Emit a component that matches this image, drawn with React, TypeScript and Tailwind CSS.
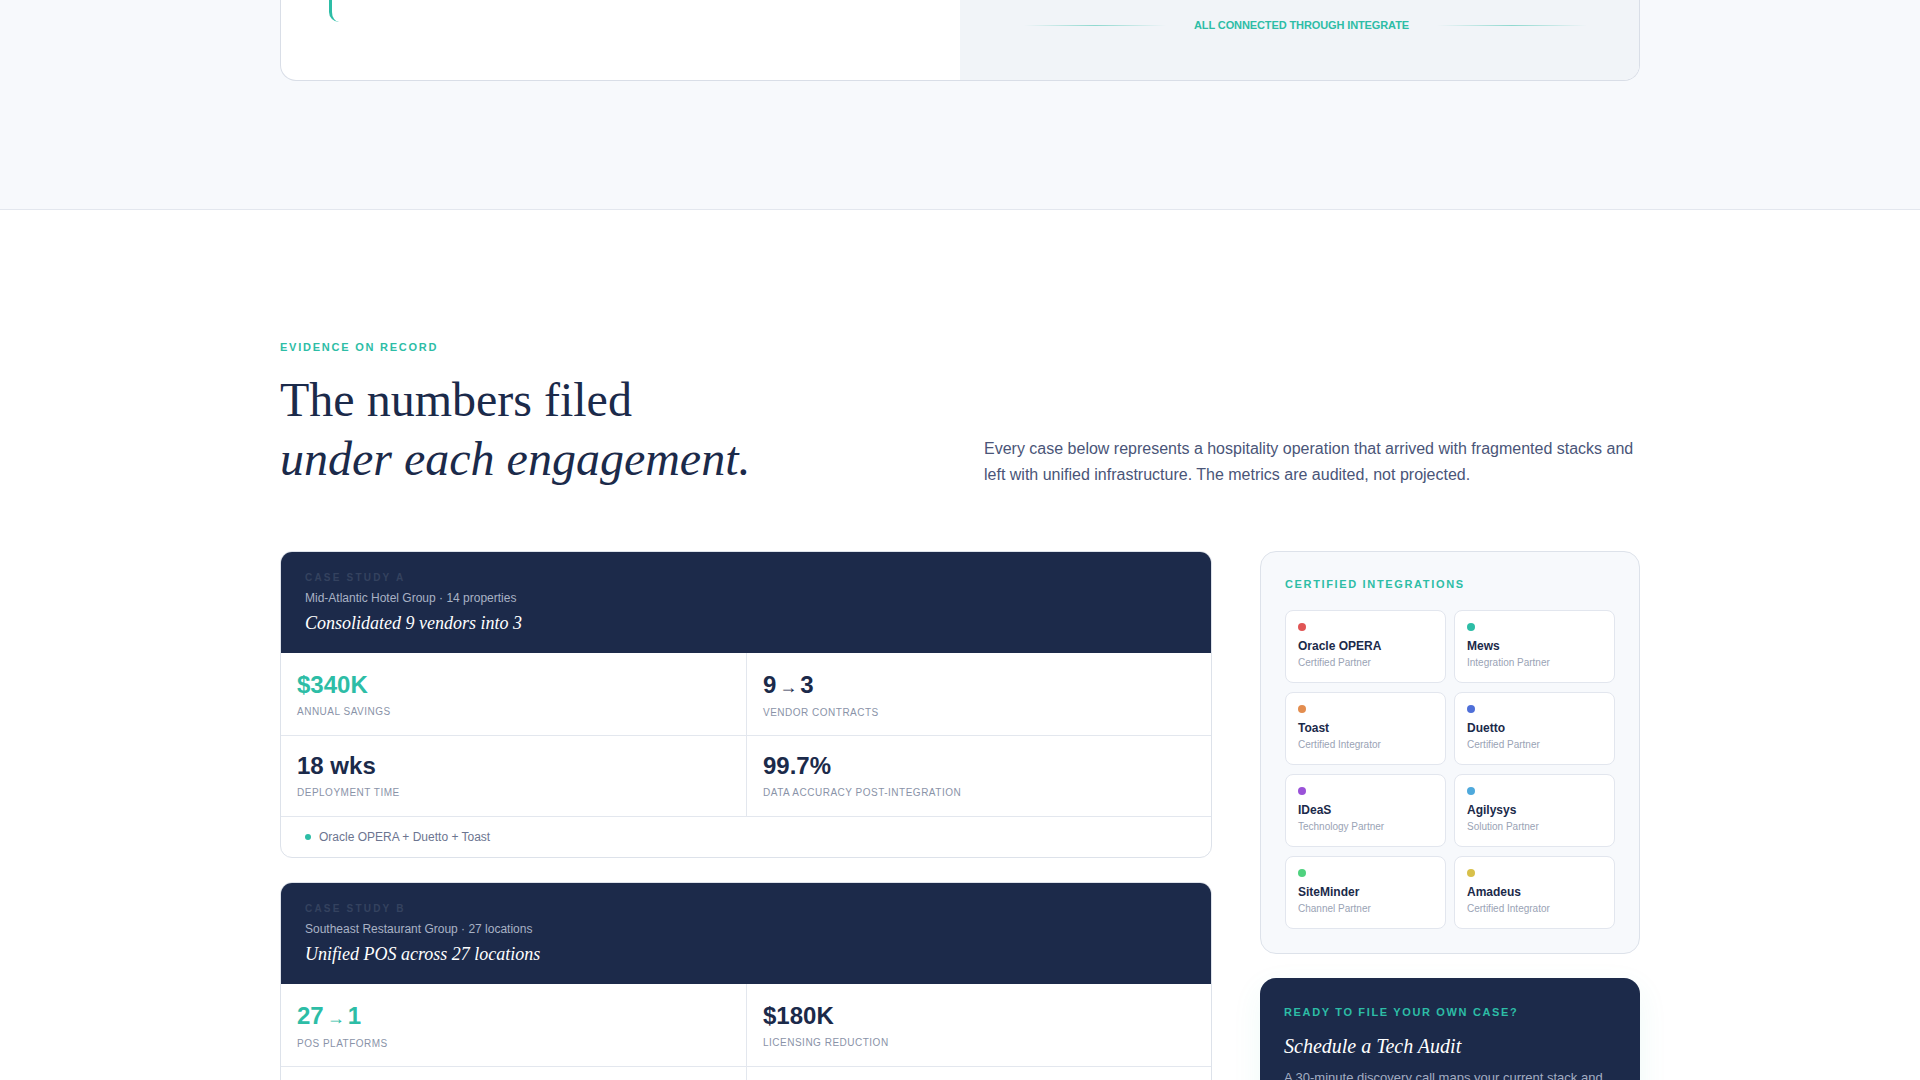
import React from "react";

type Metric = { value: React.ReactNode; label: string; accent?: boolean };
type CaseStudy = {
  tag: string;
  meta: string;
  title: string;
  metrics: Metric[];
  stack: string;
};

const Arrow = () => <span className="mx-[3px] text-lg font-bold">→</span>;

const cases: CaseStudy[] = [
  {
    tag: "CASE STUDY A",
    meta: "Mid-Atlantic Hotel Group · 14 properties",
    title: "Consolidated 9 vendors into 3",
    metrics: [
      { value: "$340K", label: "ANNUAL SAVINGS", accent: true },
      { value: <>9<Arrow />3</>, label: "VENDOR CONTRACTS" },
      { value: "18 wks", label: "DEPLOYMENT TIME" },
      { value: "99.7%", label: "DATA ACCURACY POST-INTEGRATION" },
    ],
    stack: "Oracle OPERA + Duetto + Toast",
  },
  {
    tag: "CASE STUDY B",
    meta: "Southeast Restaurant Group · 27 locations",
    title: "Unified POS across 27 locations",
    metrics: [
      { value: <>27<Arrow />1</>, label: "POS PLATFORMS", accent: true },
      { value: "$180K", label: "LICENSING REDUCTION" },
      { value: "11 wks", label: "ROLLOUT TIME" },
      { value: "42%", label: "FASTER MONTH-END CLOSE" },
    ],
    stack: "Toast + Agilysys + SiteMinder",
  },
];

const partners = [
  { name: "Oracle OPERA", role: "Certified Partner", dot: "bg-[#e05555]" },
  { name: "Mews", role: "Integration Partner", dot: "bg-[#2dbda6]" },
  { name: "Toast", role: "Certified Integrator", dot: "bg-[#e38d4f]" },
  { name: "Duetto", role: "Certified Partner", dot: "bg-[#4f6fd8]" },
  { name: "IDeaS", role: "Technology Partner", dot: "bg-[#9a52d8]" },
  { name: "Agilysys", role: "Solution Partner", dot: "bg-[#4fa9dc]" },
  { name: "SiteMinder", role: "Channel Partner", dot: "bg-[#4fd27f]" },
  { name: "Amadeus", role: "Certified Integrator", dot: "bg-[#d8c04a]" },
];

function CaseCard({ c }: { c: CaseStudy }) {
  return (
    <article className="overflow-hidden rounded-xl border border-[#dde2ea] bg-white">
      <header className="bg-[#1c2a4a] px-6 pb-[17px] pt-[18px]">
        <div className="text-[10px] font-bold leading-[15px] tracking-[0.22em] text-[#34425f]">{c.tag}</div>
        <div className="mt-1 text-xs leading-[18px] text-[#a9b2c5]">{c.meta}</div>
        <h3 className="mt-1 font-['Liberation_Serif',serif] text-lg italic leading-[1.4] text-white">{c.title}</h3>
      </header>
      <div className="grid grid-cols-2">
        {c.metrics.map((m, i) => (
          <div
            key={m.label}
            className={`px-4 ${i >= 2 ? "border-t border-[#e3e7ee] pb-4 pt-4" : "pb-[15px] pt-[18px]"} ${i % 2 === 1 ? "border-l border-[#e3e7ee]" : ""}`}
          >
            <div className={`text-2xl font-bold leading-[1.2] ${m.accent ? "text-[#2dbda6]" : "text-[#1b2a4a]"}`}>{m.value}</div>
            <div className="mt-1 text-[10px] leading-[15px] tracking-[0.05em] text-[#8a93a8]">{m.label}</div>
          </div>
        ))}
      </div>
      <footer className="flex items-center gap-2 border-t border-[#e3e7ee] px-6 py-3">
        <span className="h-1.5 w-1.5 rounded-full bg-[#2dbda6]" />
        <span className="text-xs leading-4 text-[#6c7590]">{c.stack}</span>
      </footer>
    </article>
  );
}

export default function App() {
  return (
    <div className="min-h-screen bg-white font-['Liberation_Sans',Arial,sans-serif] text-[#1b2a4a]">
      {/* Tail of the integration overview band */}
      <section className="border-b border-[#e3e7ee] bg-[#f7f9fc] pb-32">
        <div className="mx-auto w-[1360px]">
          <div className="grid h-[81px] grid-cols-2 overflow-hidden rounded-b-2xl border border-t-0 border-[#d9dee7] bg-white">
            <div className="pl-12">
              <div className="h-[22px] w-24 rounded-bl-[10px] border-l-[3px] border-[#2dbda6]" />
            </div>
            <div className="flex items-start justify-center gap-7 bg-[#f1f4f8] pl-3 pt-[17px]">
              <span className="mt-2 h-px w-[142px] bg-gradient-to-r from-transparent via-[#2dbda6]/50 to-transparent" />
              <span className="text-[11px] font-bold leading-4 tracking-[-0.01em] text-[#2dbda6]">ALL CONNECTED THROUGH INTEGRATE</span>
              <span className="mt-2 h-px w-[150px] bg-gradient-to-r from-transparent via-[#2dbda6]/50 to-transparent" />
            </div>
          </div>
        </div>
      </section>

      {/* Evidence section */}
      <section className="pb-24 pt-[129px]">
        <div className="mx-auto w-[1360px]">
          <div className="mb-[63px] grid grid-cols-2 items-end gap-12">
            <div>
              <div className="mb-3.5 text-[11px] font-bold leading-[16.5px] tracking-[0.16em] text-[#2dbda6]">EVIDENCE ON RECORD</div>
              <h2 className="font-['Liberation_Serif',serif] text-5xl font-normal leading-[1.235] text-[#1b2a4a]">
                The numbers filed
                <br />
                <em>under each engagement.</em>
              </h2>
            </div>
            <p className="text-base leading-[1.625] text-[#4a5578]">
              Every case below represents a hospitality operation that arrived with fragmented stacks and left with unified
              infrastructure. The metrics are audited, not projected.
            </p>
          </div>

          <div className="grid grid-cols-[1fr_380px] items-start gap-12">
            <div className="flex flex-col gap-6">
              {cases.map((c) => (
                <CaseCard key={c.tag} c={c} />
              ))}
            </div>

            <aside className="flex flex-col gap-6">
              <div className="rounded-2xl border border-[#dde2ea] bg-[#f7f9fc] p-6">
                <div className="mb-[17px] text-[11px] font-bold leading-[16.5px] tracking-[0.15em] text-[#2dbda6]">CERTIFIED INTEGRATIONS</div>
                <div className="grid grid-cols-2 gap-x-2 gap-y-[9px]">
                  {partners.map((p) => (
                    <div key={p.name} className="rounded-lg border border-[#e2e6ee] bg-white p-3">
                      <div className={`mb-[7px] h-2 w-2 rounded-full ${p.dot}`} />
                      <div className="text-xs font-bold leading-4 text-[#1b2a4a]">{p.name}</div>
                      <div className="mt-0.5 text-[10px] leading-[14px] text-[#9aa3b5]">{p.role}</div>
                    </div>
                  ))}
                </div>
              </div>

              <div className="rounded-2xl bg-[#1c2a4a] px-6 pb-6 pt-[26px] shadow-[0_10px_30px_rgba(45,189,166,0.08)]">
                <div className="text-[11px] font-bold leading-[16.5px] tracking-[0.15em] text-[#2dbda6]">READY TO FILE YOUR OWN CASE?</div>
                <h3 className="mt-3 font-['Liberation_Serif',serif] text-xl italic leading-[1.4] text-white">Schedule a Tech Audit</h3>
                <p className="mt-2 text-[13px] leading-[1.6] text-[#a3adc2]">
                  A 30-minute discovery call maps your current stack and shows where consolidation pays back first.
                </p>
              </div>
            </aside>
          </div>
        </div>
      </section>
    </div>
  );
}
